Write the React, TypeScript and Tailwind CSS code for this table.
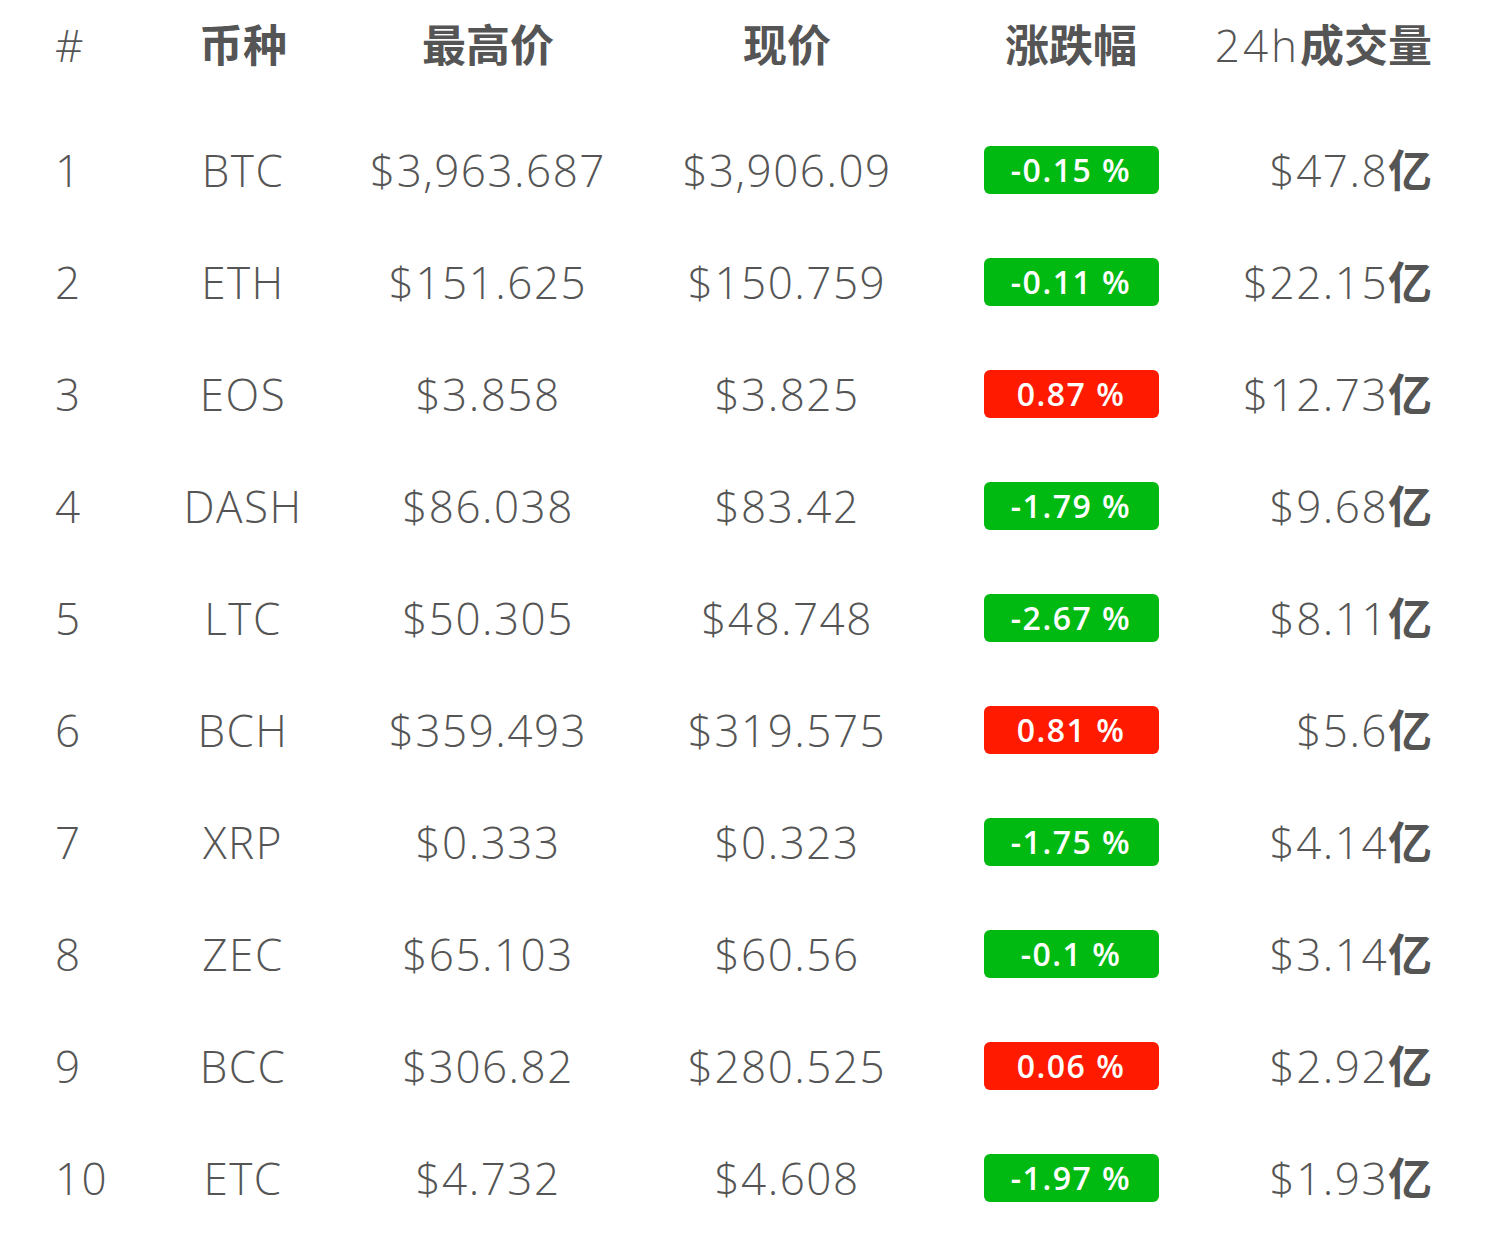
const rows = [
  { id: 1, coin: "BTC", high: "$3,963.687", now: "$3,906.09", chg: "-0.15 %", up: false, vol: "$47.8" },
  { id: 2, coin: "ETH", high: "$151.625", now: "$150.759", chg: "-0.11 %", up: false, vol: "$22.15" },
  { id: 3, coin: "EOS", high: "$3.858", now: "$3.825", chg: "0.87 %", up: true, vol: "$12.73" },
  { id: 4, coin: "DASH", high: "$86.038", now: "$83.42", chg: "-1.79 %", up: false, vol: "$9.68" },
  { id: 5, coin: "LTC", high: "$50.305", now: "$48.748", chg: "-2.67 %", up: false, vol: "$8.11" },
  { id: 6, coin: "BCH", high: "$359.493", now: "$319.575", chg: "0.81 %", up: true, vol: "$5.6" },
  { id: 7, coin: "XRP", high: "$0.333", now: "$0.323", chg: "-1.75 %", up: false, vol: "$4.14" },
  { id: 8, coin: "ZEC", high: "$65.103", now: "$60.56", chg: "-0.1 %", up: false, vol: "$3.14" },
  { id: 9, coin: "BCC", high: "$306.82", now: "$280.525", chg: "0.06 %", up: true, vol: "$2.92" },
  { id: 10, coin: "ETC", high: "$4.732", now: "$4.608", chg: "-1.97 %", up: false, vol: "$1.93" },
];

const font = "font-['Open_Sans','Noto_Sans_CJK_SC',sans-serif]";

export default function App() {
  return (
    <div className={`min-h-screen bg-white pl-[55px] text-[#555555] ${font}`}>
      {/* Header */}
      <div className="flex h-[90px] items-center text-[44px] leading-none">
        <div className="w-[100px] font-[350]">#</div>
        <div className="w-[176px] text-center font-bold">币种</div>
        <div className="w-[314px] text-center font-bold">最高价</div>
        <div className="w-[284px] text-center font-bold">现价</div>
        <div className="w-[284px] text-center font-bold">涨跌幅</div>
        <div className="w-[219px] text-right whitespace-nowrap">
          <span className="font-[350] tracking-[3px]">24h</span>
          <span className="font-bold">成交量</span>
        </div>
      </div>

      {/* Rows */}
      <div className="mt-[24px]">
        {rows.map((r) => (
          <div key={r.id} className="flex h-[112px] items-center text-[44px] font-[350] leading-none tracking-[1.5px]">
            <div className="w-[100px]">{r.id}</div>
            <div className="w-[176px] text-center">{r.coin}</div>
            <div className="w-[314px] text-center">{r.high}</div>
            <div className="w-[284px] text-center">{r.now}</div>
            <div className="flex w-[284px] justify-center">
              <div
                className={`flex h-[48px] w-[175px] items-center justify-center rounded-[6px] text-[32px] font-semibold tracking-[1.5px] text-white ${
                  r.up ? "bg-[#ff1a00]" : "bg-[#00ba12]"
                }`}
              >
                {r.chg}
              </div>
            </div>
            <div className="w-[219px] whitespace-nowrap text-right">
              {r.vol}
              <span className="font-bold tracking-normal">亿</span>
            </div>
          </div>
        ))}
      </div>
    </div>
  );
}
